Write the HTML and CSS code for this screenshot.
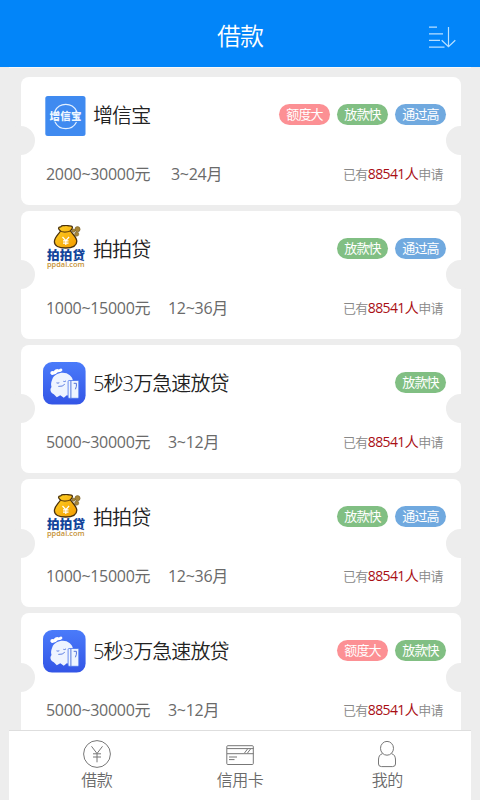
FILE: index.html
```html
<!DOCTYPE html>
<html lang="zh-CN">
<head>
  <meta charset="UTF-8" />
  <meta name="viewport" content="width=device-width, initial-scale=1.0" />
  <title>借款</title>
  <link rel="stylesheet" href="styles.css">
</head>
<body>
  <!-- Shared logos -->
  <svg width="0" height="0" class="defs">
    <defs>
      <linearGradient id="blueFill" x1="0" y1="0" x2="0" y2="1">
        <stop offset="0" stop-color="#4a7bfa" />
        <stop offset="1" stop-color="#3355e6" />
      </linearGradient>
      <linearGradient id="bagFill" x1="0" y1="0" x2="1" y2="1">
        <stop offset="0" stop-color="#ffd427" />
        <stop offset="1" stop-color="#f39a00" />
      </linearGradient>
    </defs>
    <symbol id="logo-ppd" viewBox="0 0 44 44">
      <g fill="#a98636" stroke="#75602b" stroke-width=".6">
        <circle cx="34.5" cy="4.2" r="2.6" />
        <circle cx="33.7" cy="9.1" r="2.1" />
        <circle cx="30.5" cy="5.7" r="1.6" />
      </g>
      <path transform="translate(0 -1)" d="M17.5 7C14.8 4.8 15 2.8 17.7 2.8C18.9 1.1 20.5 2 21.6 1.6C23.5.8 24.8 1.9 26.8 1.9C30.4 1.9 30 4.4 27.4 6.8C29.7 10.3 33.8 13.3 33.8 17.3C33.8 21.8 29.3 24 22.5 24C16 24 11.4 21.9 11.4 17.8C11.4 13.3 15.5 10.6 17.5 7Z" fill="url(#bagFill)" stroke="#49310c" stroke-width="1.3" />
      <path d="M17.3 6.3Q22 8 27.7 6" fill="none" stroke="#69460e" stroke-width="1.2" />
      <path d="M19.5 12l3.3 3.7 3.3-3.7M22.8 15.5V20M20 15.9h5.5M20 18.1h5.5" fill="none" stroke="#fff" stroke-width="1.2" />
    </symbol>
    <symbol id="logo-5s" viewBox="0 0 44 44">
      <rect x="0" y="0" width="42.6" height="42.6" rx="9" fill="url(#blueFill)" />
      <path transform="translate(-.7 -.7)" d="M10 18C12 12 22 9 27.5 14C31 17 31 20 30.5 24L29 35L24.5 34L21.5 36.5L18 34L14.5 36L11.5 33C7.8 31.5 7.4 28 9.2 25.8C8.3 23 8.9 20.5 10 18Z" fill="#eef4ff" />
      <path transform="translate(-.7 -.7)" d="M8 12.3Q7.7 9 11.2 10Q14 6.8 16.6 8.2Q19.8 6 20.2 9Q19.3 11 15.5 10.9Q13 14 9.5 13.7Z" fill="#fff" />
      <path d="M13.5 20.8q1.6.8 2.8-.1M20.3 19.3q1.5.7 2.7-.4M15.3 24.4q4.5.4 6.5-2.2" fill="none" stroke="#4f73df" stroke-width=".9" />
      <rect x="25.1" y="18.5" width="10.7" height="17.8" rx="1" fill="#eef5ff" stroke="#4874ed" stroke-width=".8" />
      <path d="M27.9 18.7v17.4M30.7 21.3h2.7v3l-1 3" fill="none" stroke="#5275db" stroke-width="1" />
    </symbol>
  </svg>

  <div class="app">
    <header class="header">
      <h1>借款</h1>
      <svg class="sort-icon" viewBox="0 0 28 24">
        <path d="M1 2.2h8M1 8.8h14M1 15.4h11M1 22.1h15.5M20.5 2v19.5M13.7 15.2l6.8 6.5 6.8-6.5" />
      </svg>
    </header>

    <main class="list">
      <section class="card">
        <div class="card-top">
          <svg class="logo" viewBox="0 0 44 44">
            <rect x="2.3" y="2" width="40.2" height="40" rx="2.5" fill="#3f8af0" />
            <path d="M12 17a12 12 0 0 1 21.5 0M12 28a12 12 0 0 0 21.5 0" fill="none" stroke="#e4f0ff" stroke-width="1.2" />
            <text x="6.5" y="26.1" class="zxb-text" textLength="32">增信宝</text>
          </svg>
          <h2>增信宝</h2>
          <div class="tags">
            <span class="tag red">额度大</span>
            <span class="tag green">放款快</span>
            <span class="tag blue">通过高</span>
          </div>
        </div>
        <div class="card-info">
          <span class="amount">2000~30000元</span>
          <span class="term term-wide">3~24月</span>
          <span class="applied">已有<b>88541人</b>申请</span>
        </div>
      </section>

      <section class="card">
        <div class="card-top">
          <svg class="logo logo-raised" viewBox="0 0 44 44">
            <use href="#logo-ppd" width="44" height="44" />
            <text x="4" y="34.8" class="ppd-name" textLength="38">拍拍贷</text>
            <text x="4" y="41.6" class="ppd-url" textLength="37.5" lengthAdjust="spacingAndGlyphs">ppdai.com</text>
          </svg>
          <h2>拍拍贷</h2>
          <div class="tags">
            <span class="tag green">放款快</span>
            <span class="tag blue">通过高</span>
          </div>
        </div>
        <div class="card-info">
          <span class="amount">1000~15000元</span>
          <span class="term">12~36月</span>
          <span class="applied">已有<b>88541人</b>申请</span>
        </div>
      </section>

      <section class="card">
        <div class="card-top">
          <svg class="logo"><use href="#logo-5s" /></svg>
          <h2>5秒3万急速放贷</h2>
          <div class="tags">
            <span class="tag green">放款快</span>
          </div>
        </div>
        <div class="card-info">
          <span class="amount">5000~30000元</span>
          <span class="term">3~12月</span>
          <span class="applied">已有<b>88541人</b>申请</span>
        </div>
      </section>

      <section class="card">
        <div class="card-top">
          <svg class="logo logo-raised" viewBox="0 0 44 44">
            <use href="#logo-ppd" width="44" height="44" />
            <text x="4" y="34.8" class="ppd-name" textLength="38">拍拍贷</text>
            <text x="4" y="41.6" class="ppd-url" textLength="37.5" lengthAdjust="spacingAndGlyphs">ppdai.com</text>
          </svg>
          <h2>拍拍贷</h2>
          <div class="tags">
            <span class="tag green">放款快</span>
            <span class="tag blue">通过高</span>
          </div>
        </div>
        <div class="card-info">
          <span class="amount">1000~15000元</span>
          <span class="term">12~36月</span>
          <span class="applied">已有<b>88541人</b>申请</span>
        </div>
      </section>

      <section class="card">
        <div class="card-top">
          <svg class="logo"><use href="#logo-5s" /></svg>
          <h2>5秒3万急速放贷</h2>
          <div class="tags">
            <span class="tag red">额度大</span>
            <span class="tag green">放款快</span>
          </div>
        </div>
        <div class="card-info">
          <span class="amount">5000~30000元</span>
          <span class="term">3~12月</span>
          <span class="applied">已有<b>88541人</b>申请</span>
        </div>
      </section>
    </main>

    <nav class="tabbar">
      <a class="tab">
        <svg viewBox="0 0 30 30">
          <circle cx="15" cy="15" r="13.4" />
          <path d="M9.5 7.3l5.5 7.2 5.5-7.2M15 14.5v8.8M11 14.8h8M11 18h8" />
        </svg>
        <span>借款</span>
      </a>
      <a class="tab tab-card">
        <svg viewBox="0 0 30 30">
          <rect x="1.8" y="6.7" width="26.5" height="18.8" rx="1" />
          <path d="M2 9.6h26.5M2 14.7h26.5M4 18h8M4 20.6h5.5M19.5 14l3-4M22.5 14l3-4" />
        </svg>
        <span>信用卡</span>
      </a>
      <a class="tab">
        <svg viewBox="0 0 30 30">
          <ellipse cx="15" cy="9.3" rx="6.5" ry="6.9" />
          <path d="M10.5 14.7C7.5 15.3 6.5 18 6.5 21V25Q6.5 27.6 9.5 27.6H20.5Q23.5 27.6 23.5 25V21C23.5 18 22.5 15.3 19.5 14.7" />
        </svg>
        <span>我的</span>
      </a>
    </nav>
  </div>
</body>
</html>
```

FILE: styles.css
```css
/* Base */
* { box-sizing: border-box; }
body {
  margin: 0;
  background: #ededed;
  font-family: "Open Sans", "Noto Sans CJK SC", sans-serif;
  color: #6a6a6a;
}
.defs { position: absolute; }
.app {
  width: 480px;
  height: 800px;
  display: flex;
  flex-direction: column;
  overflow: hidden;
}

/* Header */
.header {
  flex: none;
  display: grid;
  grid-template-columns: 1fr auto 1fr;
  align-items: center;
  height: 67px;
  padding: 5px 24px 0;
  background: #0285f9;
}
.header h1 {
  grid-column: 2;
  margin: 0;
  font-size: 24px;
  line-height: 36px;
  font-weight: 350;
  letter-spacing: -1px;
  color: #fff;
}
.sort-icon {
  justify-self: end;
  width: 28px;
  height: 24px;
  margin-top: 2px;
  fill: none;
  stroke: #b9e0ff;
  stroke-width: 1.2;
}

/* Loan list */
.list {
  flex: 1;
  min-height: 0;
  display: flex;
  flex-direction: column;
  gap: 6.2px;
  margin: 0 9px;
  padding: 8.5px 10px 0 12px;
  border-top: 1px solid #f9f9f9;
  overflow: hidden;
}
.card {
  position: relative;
  flex: none;
  height: 128px;
  padding: 17px 15px 0 22px;
  background: #fff;
  border-radius: 8px;
}
/* ticket notches on both sides */
.card::before,
.card::after {
  content: "";
  position: absolute;
  top: 49.5px;
  width: 29px;
  height: 29px;
  border-radius: 50%;
  background: #ededed;
}
.card::before { left: -15px; }
.card::after { right: -14px; }

.card-top {
  display: flex;
  align-items: center;
  height: 44px;
}
.logo { width: 44px; height: 44px; }
.logo-raised { margin-top: -5px; }
.card h2 {
  margin: 0 0 0 6px;
  font-size: 20px;
  line-height: 30px;
  font-weight: 350;
  letter-spacing: -0.9px;
  color: #222;
}
.tags {
  display: flex;
  gap: 7px;
  margin: 0 0 3px auto;
}
.tag {
  width: 51px;
  height: 21px;
  border-radius: 11px;
  font-size: 13px;
  line-height: 20px;
  letter-spacing: -0.9px;
  text-align: center;
  color: #fff;
}
.red { background: #fc9094; }
.green { background: #81bf83; }
.blue { background: #70a9df; }

.card-info {
  display: flex;
  align-items: center;
  height: 24px;
  margin-top: 23px;
  padding: 0 3px;
  white-space: nowrap;
}
.amount,
.term {
  font-size: 16px;
  font-weight: 400;
  letter-spacing: -0.3px;
}
.amount { width: 105px; }
.term { margin-left: 17px; }
.term-wide { margin-left: 20px; }
.applied {
  margin-left: auto;
  font-size: 13px;
  font-weight: 350;
  letter-spacing: -0.6px;
  color: #888;
}
.applied b {
  font-size: 14px;
  font-weight: 400;
  letter-spacing: -0.6px;
  color: #a90e14;
}

/* Logo lettering */
.zxb-text {
  font: 900 10.5px "Noto Sans CJK SC", sans-serif;
  fill: #eef6ff;
}
.ppd-name {
  font: 900 12.5px "Noto Sans CJK SC", sans-serif;
  fill: #12449b;
}
.ppd-url {
  font: 600 7.5px "Open Sans", sans-serif;
  fill: #c69236;
}

/* Bottom tabs */
.tabbar {
  flex: none;
  display: grid;
  grid-template-columns: repeat(3, 1fr);
  height: 70px;
  margin: 0 9px;
  padding: 8px 11px 0 15px;
  border-top: 1px solid #dedede;
  background: #fff;
}
.tab {
  display: flex;
  flex-direction: column;
  align-items: center;
}
.tab-card { padding-right: 4px; }
.tab svg {
  width: 30px;
  height: 30px;
  fill: none;
  stroke: #777;
  stroke-width: 1;
}
.tab span {
  font-size: 16px;
  line-height: 23px;
  font-weight: 350;
  letter-spacing: -0.5px;
}
```
